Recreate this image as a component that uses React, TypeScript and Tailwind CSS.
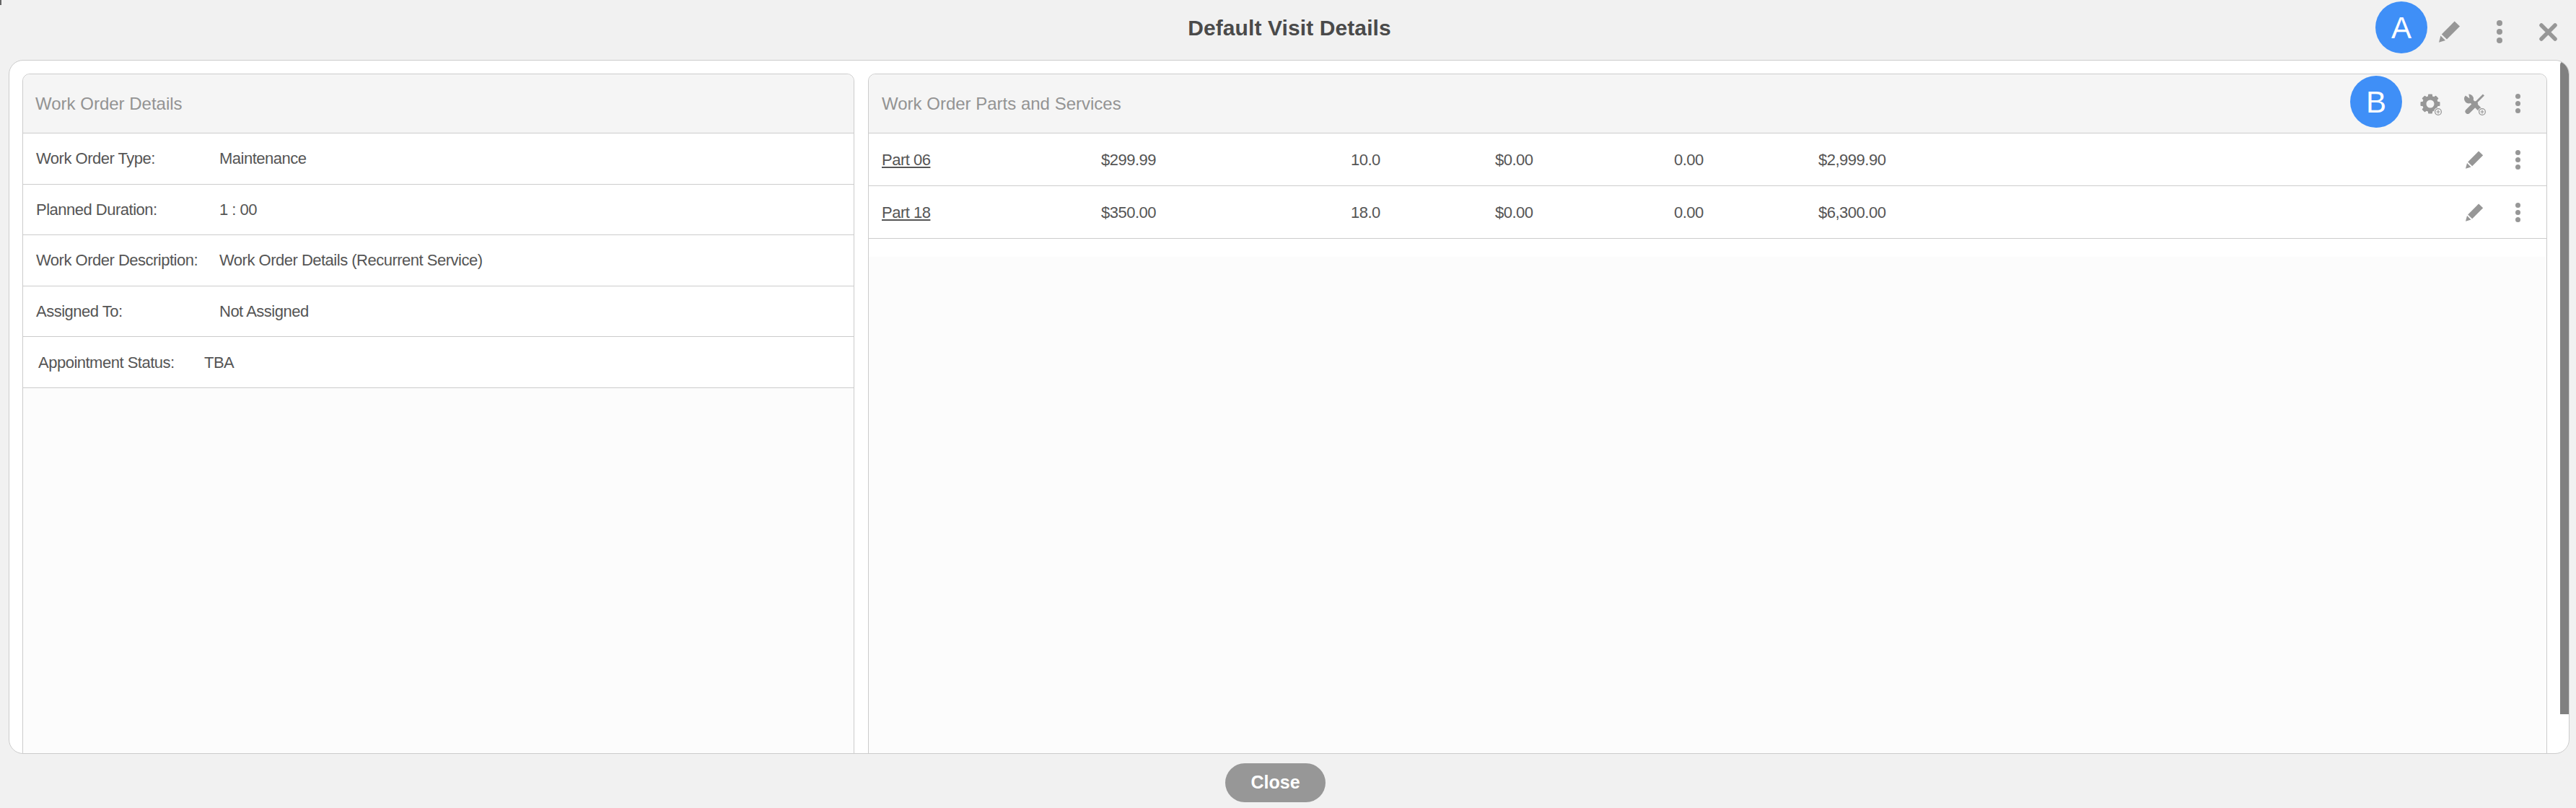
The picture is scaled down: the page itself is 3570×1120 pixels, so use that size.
import React from 'react';

const detailRows = [
  { label: 'Work Order Type:', value: 'Maintenance' },
  { label: 'Planned Duration:', value: '1 : 00' },
  { label: 'Work Order Description:', value: 'Work Order Details (Recurrent Service)' },
  { label: 'Assigned To:', value: 'Not Assigned' },
];

const partRows = [
  { name: 'Part 06', price: '$299.99', qty: '10.0', discount: '$0.00', tax: '0.00', total: '$2,999.90' },
  { name: 'Part 18', price: '$350.00', qty: '18.0', discount: '$0.00', tax: '0.00', total: '$6,300.00' },
];

const Pencil: React.FC<{ className?: string }> = ({ className }) => (
  <svg viewBox="0 0 30 30" className={className} fill="#979797">
    <path d="M21.7 0.5 L29 7.5 L11 25.5 L3.8 18.5 Z" />
    <path d="M2.4 20.5 L9 27 L0 29.8 Z" />
  </svg>
);

const Gear: React.FC = () => (
  <svg viewBox="0 0 28 28" className="w-[28px] h-[28px]">
    <circle cx="14" cy="14" r="8.2" fill="none" stroke="#979797" strokeWidth="5.4" />
    {[0, 45, 90, 135, 180, 225, 270, 315].map(a => (
      <rect key={a} x="11" y="0.5" width="6" height="6" rx="1" fill="#979797" transform={`rotate(${a} 14 14)`} />
    ))}
  </svg>
);

const Tools: React.FC = () => (
  <svg viewBox="0 0 28 28" className="w-[28px] h-[28px]">
    <path d="M6 6 L23 23" stroke="#979797" strokeWidth="6" strokeLinecap="round" />
    <circle cx="6.5" cy="7" r="6.5" fill="#979797" />
    <path d="M7.5 6.5 L6 -1 L0.5 -1 L0.5 1.5 Z" fill="#f5f5f5" />
    <path d="M27 1.5 L14 14.5" stroke="#979797" strokeWidth="3" />
    <path d="M15.5 14 L5 24.5" stroke="#979797" strokeWidth="7" strokeLinecap="round" />
  </svg>
);

const Dots: React.FC<{ size?: 'lg' | 'sm' }> = ({ size = 'sm' }) => (
  <div className={size === 'lg' ? 'flex flex-col gap-[4px]' : 'flex flex-col gap-[3px]'}>
    {[0, 1, 2].map(i => (
      <div key={i} className={size === 'lg' ? 'w-[8px] h-[8px] rounded-full bg-[#979797]' : 'w-[7px] h-[7px] rounded-full bg-[#979797]'} />
    ))}
  </div>
);

const PlusBadge: React.FC = () => (
  <svg viewBox="0 0 12 12" className="absolute right-[-3px] bottom-[-3px] w-[12px] h-[12px]">
    <circle cx="6" cy="6" r="6" fill="#f5f5f5" />
    <circle cx="6" cy="6" r="4.4" fill="none" stroke="#979797" strokeWidth="1.2" />
    <path d="M6 3.5 V8.5 M3.5 6 H8.5" stroke="#979797" strokeWidth="1.2" />
  </svg>
);

const Badge: React.FC<{ letter: string; className: string }> = ({ letter, className }) => (
  <div className={`absolute w-[72px] h-[72px] rounded-full bg-[#3f8ff7] text-white text-[42px] flex items-center justify-center ${className}`}>
    {letter}
  </div>
);

export default function App() {
  return (
    <div className="relative h-[1120px] w-[3570px] overflow-hidden bg-[#f1f1f1] font-['Liberation_Sans',Arial,sans-serif] text-[#555555]">
      <div className="absolute left-0 top-0 w-[2px] h-[7px] bg-[#666666]" />

      {/* Header */}
      <div className="relative h-[83px] flex items-center justify-center">
        <h1 className="text-[30px] font-bold text-[#4a4a4a] tracking-[0.1px] mb-[7px] ml-[4px]">Default Visit Details</h1>
        <Badge letter="A" className="left-[3292px] top-[2px]" />
        <div className="absolute right-[26px] top-[28px] flex items-center">
          <Pencil className="w-[30px] h-[30px] mr-[50px]" />
          <div className="mr-[51px]"><Dots size="lg" /></div>
          <svg viewBox="0 0 25 25" className="w-[25px] h-[25px]">
            <path d="M3 3 L22 22 M22 3 L3 22" stroke="#979797" strokeWidth="5.5" strokeLinecap="round" />
          </svg>
        </div>
      </div>

      {/* Card */}
      <div className="relative ml-[12px] w-[3549px] h-[962px] bg-white border border-[#cccccc] rounded-[20px] pt-[18px] pl-[18px] flex gap-[19px] overflow-hidden">
        {/* Scrollbar */}
        <div className="absolute right-[0px] top-0 w-[12px] h-[906px] bg-[#808080] rounded-t-[8px]" />

        {/* Left panel */}
        <div className="w-[1153px] h-[944px] border border-[#cccccc] rounded-t-[10px] bg-[#fcfcfc] flex flex-col">
          <div className="h-[82px] shrink-0 bg-[#f5f5f5] border-b border-[#cccccc] rounded-t-[10px] flex items-center pl-[17px] pt-[1px] text-[24px] text-[#939393]">
            Work Order Details
          </div>
          {detailRows.map(row => (
            <div key={row.label} className="h-[70.6px] shrink-0 bg-white border-b border-[#cccccc] flex items-center pl-[18px] text-[22px] tracking-[-0.5px]">
              <div className="w-[254px]">{row.label}</div>
              <div>{row.value}</div>
            </div>
          ))}
          <div className="h-[70.6px] shrink-0 bg-white border-b border-[#cccccc] flex items-center pl-[21px] text-[22px] tracking-[-0.5px]">
            <div className="w-[230px]">Appointment Status:</div>
            <div>TBA</div>
          </div>
        </div>

        {/* Right panel */}
        <div className="w-[2327px] h-[944px] border border-[#cccccc] rounded-t-[10px] bg-[#fcfcfc] flex flex-col">
          <div className="relative h-[82px] shrink-0 bg-[#f5f5f5] border-b border-[#cccccc] rounded-t-[10px] flex items-center justify-between pl-[18px] pr-[36px] text-[24px] text-[#939393]">
            <span className="pt-[1px]">Work Order Parts and Services</span>
            <div className="flex items-center">
              <div className="relative mr-[33px] w-[28px] h-[28px]">
                <Gear />
                <PlusBadge />
              </div>
              <div className="relative mr-[43px] w-[28px] h-[28px]">
                <Tools />
                <PlusBadge />
              </div>
              <Dots />
            </div>
          </div>
          {partRows.map(part => (
            <div key={part.name} className="h-[73px] shrink-0 bg-white border-b border-[#cccccc] flex items-center pl-[18px] pr-[36px] text-[22px] tracking-[-0.5px]">
              <a className="w-[304px] underline">{part.name}</a>
              <div className="w-[346px]">{part.price}</div>
              <div className="w-[200px]">{part.qty}</div>
              <div className="w-[248px]">{part.discount}</div>
              <div className="w-[200px]">{part.tax}</div>
              <div className="flex-1">{part.total}</div>
              <Pencil className="w-[25px] h-[25px] mr-[44px]" />
              <Dots />
            </div>
          ))}
          <div className="h-[25px] shrink-0 bg-white" />
        </div>
      </div>

      <Badge letter="B" className="left-[3257px] top-[105px]" />

      {/* Footer */}
      <div className="flex justify-center pt-[13px]">
        <button className="w-[139px] h-[54px] ml-[-35px] rounded-full bg-[#979797] text-white text-[25px] font-bold">Close</button>
      </div>
    </div>
  );
}
